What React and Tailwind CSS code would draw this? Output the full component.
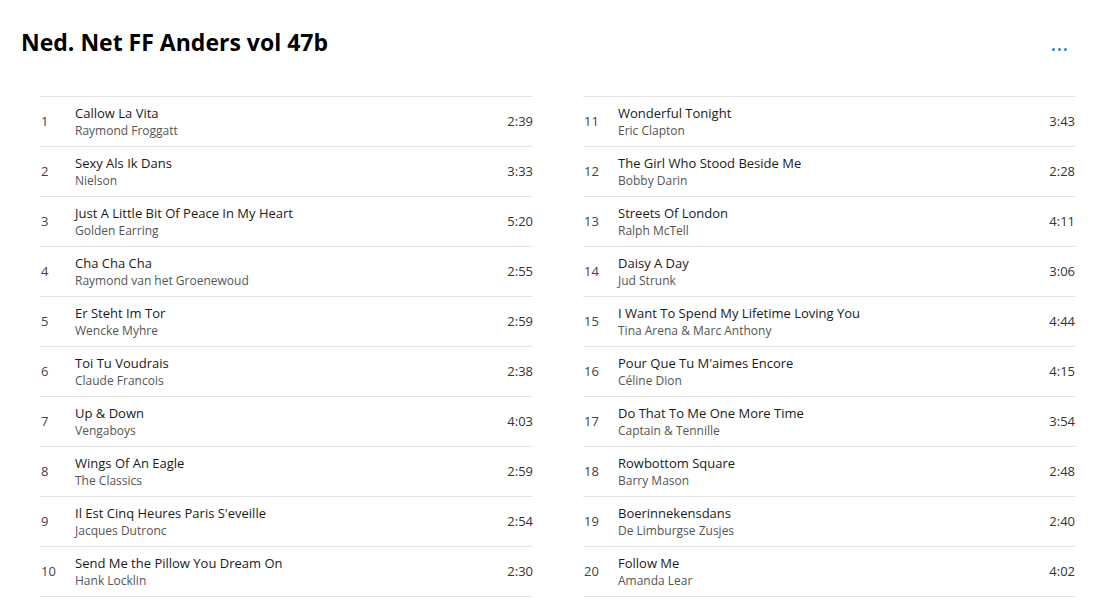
const LEFT = [
  ["1", "Callow La Vita", "Raymond Froggatt", "2:39"],
  ["2", "Sexy Als Ik Dans", "Nielson", "3:33"],
  ["3", "Just A Little Bit Of Peace In My Heart", "Golden Earring", "5:20"],
  ["4", "Cha Cha Cha", "Raymond van het Groenewoud", "2:55"],
  ["5", "Er Steht Im Tor", "Wencke Myhre", "2:59"],
  ["6", "Toi Tu Voudrais", "Claude Francois", "2:38"],
  ["7", "Up & Down", "Vengaboys", "4:03"],
  ["8", "Wings Of An Eagle", "The Classics", "2:59"],
  ["9", "Il Est Cinq Heures Paris S'eveille", "Jacques Dutronc", "2:54"],
  ["10", "Send Me the Pillow You Dream On", "Hank Locklin", "2:30"],
];

const RIGHT = [
  ["11", "Wonderful Tonight", "Eric Clapton", "3:43"],
  ["12", "The Girl Who Stood Beside Me", "Bobby Darin", "2:28"],
  ["13", "Streets Of London", "Ralph McTell", "4:11"],
  ["14", "Daisy A Day", "Jud Strunk", "3:06"],
  ["15", "I Want To Spend My Lifetime Loving You", "Tina Arena & Marc Anthony", "4:44"],
  ["16", "Pour Que Tu M'aimes Encore", "Céline Dion", "4:15"],
  ["17", "Do That To Me One More Time", "Captain & Tennille", "3:54"],
  ["18", "Rowbottom Square", "Barry Mason", "2:48"],
  ["19", "Boerinnekensdans", "De Limburgse Zusjes", "2:40"],
  ["20", "Follow Me", "Amanda Lear", "4:02"],
];

function TrackList({ tracks }) {
  return (
    <div className="border-t border-[#e5e5e5]">
      {tracks.map(([num, title, artist, time]) => (
        <div key={num} className="h-[50px] flex items-center border-b border-[#e5e5e5]">
          <div className="w-[35px] pl-px text-[13px] text-[#444]">{num}</div>
          <div className="flex-1 flex flex-col leading-[17px] pt-px">
            <span className="text-[13px] text-[#1a1a1a]">{title}</span>
            <span className="text-[12px] text-[#555]">{artist}</span>
          </div>
          <div className="text-[13px] text-[#333]">{time}</div>
        </div>
      ))}
    </div>
  );
}

export default function App() {
  return (
    <div className="w-[1110px] h-[605px] bg-white overflow-hidden font-['Open_Sans',sans-serif]">
      <div className="flex items-start justify-between pl-[21px] pr-[43px] pt-[26px] h-[96px]">
        <h1 className="text-[23px] font-bold text-black leading-[32px]">Ned. Net FF Anders vol 47b</h1>
        <div className="flex gap-[3px] mt-[22px]">
          <span className="w-[3px] h-[3px] rounded-full bg-[#2f7fd8]" />
          <span className="w-[3px] h-[3px] rounded-full bg-[#2f7fd8]" />
          <span className="w-[3px] h-[3px] rounded-full bg-[#2f7fd8]" />
        </div>
      </div>
      <div className="grid grid-cols-[493px_492px] gap-x-[50px] pl-[40px]">
        <TrackList tracks={LEFT} />
        <TrackList tracks={RIGHT} />
      </div>
    </div>
  );
}
